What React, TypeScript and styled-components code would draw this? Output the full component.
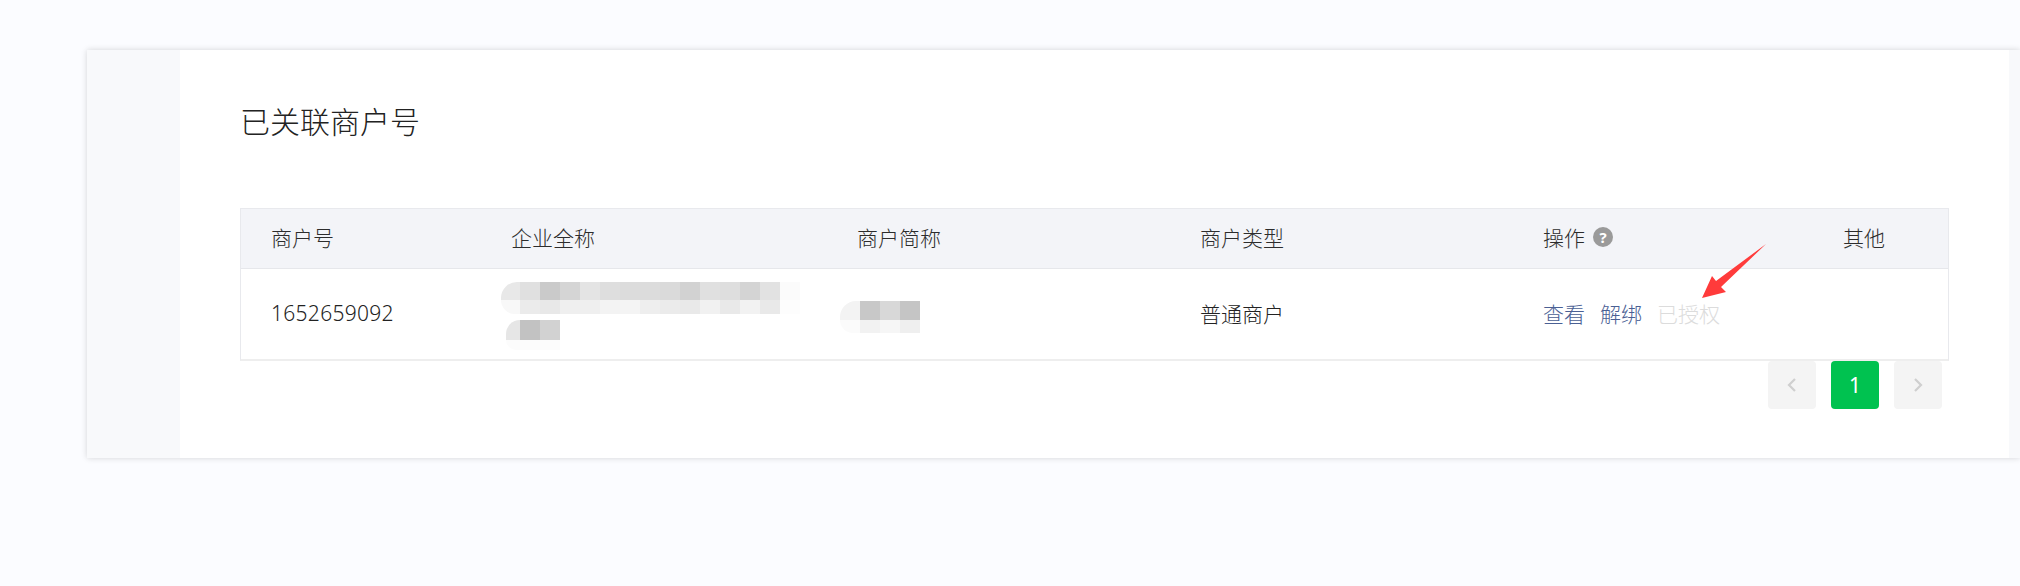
import React from 'react';
import styled, { createGlobalStyle } from 'styled-components';

const tilesTop = ['#e0e0e0', '#cacaca', '#d5d5d5', '#e4e4e4', '#dedede', '#dcdcdc', '#dcdcdc', '#dadada', '#d2d2d2', '#e0e0e0', '#dedede', '#d4d4d4', '#e2e2e2', '#fbfbfb'];
const tilesBottom = ['#ebebeb', '#e8e8e8', '#efefef', '#efefef', '#f3f3f3', '#f4f4f4', '#eeeeee', '#ebebeb', '#e9e9e9', '#f1f1f1', '#e9e9e9', '#f2f2f2', '#e9e9e9', '#fdfdfd'];

function App() {
  return (
    <>
      <GlobalStyle />
      <Page>
        <Card>
          <Side />
          <Main>
            <Title>已关联商户号</Title>
            <Table>
              <HeadRow>
                <FirstCell>商户号</FirstCell>
                <Cell>企业全称</Cell>
                <Cell>商户简称</Cell>
                <Cell>商户类型</Cell>
                <Cell>
                  操作
                  <HelpIcon>?</HelpIcon>
                </Cell>
                <Cell>其他</Cell>
              </HeadRow>
              <BodyRow>
                <FirstCell>
                  <MerchantNo>1652659092</MerchantNo>
                </FirstCell>
                <MosaicCell $pad={5}>
                  <Mosaic $offset={-10}>
                    <MosaicRow $height={18}>
                      <MosaicCap $top $color="#e8e8e8" $width={19} />
                      {tilesTop.map((color, i) => (
                        <Tile key={i} $color={color} />
                      ))}
                    </MosaicRow>
                    <MosaicRow $height={14}>
                      <MosaicCap $color="#f8f8f8" $width={19} />
                      {tilesBottom.map((color, i) => (
                        <Tile key={i} $color={color} />
                      ))}
                    </MosaicRow>
                  </Mosaic>
                  <Mosaic $offset={-5} $gap={6}>
                    <MosaicRow $height={20}>
                      <MosaicCap $top $color="#e6e6e6" $width={14} />
                      <Tile $color="#c2c2c2" />
                      <Tile $color="#d2d2d2" />
                    </MosaicRow>
                    <MosaicRow $height={10}>
                      <MosaicCap $color="#fcfcfc" $width={14} />
                      <Tile $color="#fcfcfc" />
                      <Tile $color="#fcfcfc" />
                    </MosaicRow>
                  </Mosaic>
                </MosaicCell>
                <MosaicCell $pad={7}>
                  <Mosaic $offset={-17}>
                    <MosaicRow $height={19}>
                      <MosaicCap $top $color="#f3f3f3" $width={20} />
                      <Tile $color="#c8c8c8" />
                      <Tile $color="#d8d8d8" />
                      <Tile $color="#c5c5c5" />
                    </MosaicRow>
                    <MosaicRow $height={13}>
                      <MosaicCap $color="#fbfbfb" $width={20} />
                      <Tile $color="#f2f2f2" />
                      <Tile $color="#f6f6f6" />
                      <Tile $color="#efefef" />
                    </MosaicRow>
                  </Mosaic>
                </MosaicCell>
                <Cell>普通商户</Cell>
                <ActionCell>
                  <ActionLink>查看</ActionLink>
                  <ActionLink>解绑</ActionLink>
                  <ActionLink $disabled>已授权</ActionLink>
                  <Arrow viewBox="0 0 64 54" aria-hidden="true">
                    <polygon points="0,54 10,32 14,37 64,0 19,43 24,48" fill="#ff3b3b" />
                  </Arrow>
                </ActionCell>
                <Cell />
              </BodyRow>
            </Table>
            <Pagination>
              <PageButton aria-label="上一页">
                <svg width="12" height="16" viewBox="0 0 12 16">
                  <polyline points="9,2 3,8 9,14" fill="none" stroke="#cfcfcf" strokeWidth="2.200" />
                </svg>
              </PageButton>
              <PageButton $active>1</PageButton>
              <PageButton aria-label="下一页">
                <svg width="12" height="16" viewBox="0 0 12 16">
                  <polyline points="3,2 9,8 3,14" fill="none" stroke="#cfcfcf" strokeWidth="2.200" />
                </svg>
              </PageButton>
            </Pagination>
          </Main>
          <RightStrip />
        </Card>
      </Page>
    </>
  );
}

const GlobalStyle = createGlobalStyle`
  html, body {
    margin: 0;
    padding: 0;
    background: #fbfcff;
  }
  body {
    font-family: "Noto Sans", "Noto Sans CJK SC", sans-serif;
  }
`;

const Page = styled.div`
  width: 2020px;
  height: 586px;
  overflow: hidden;
  padding: 50px 0 0 87px;
  box-sizing: border-box;
`;

const Card = styled.div`
  display: flex;
  width: 1933px;
  height: 408px;
  box-shadow: 0 0 6px rgba(0, 0, 0, 0.16);
`;

const Side = styled.div`
  width: 93px;
  flex-shrink: 0;
  background: #f8f9fb;
`;

const RightStrip = styled.div`
  width: 11px;
  flex-shrink: 0;
  background: #f8f9fb;
`;

const Main = styled.div`
  width: 1829px;
  flex-shrink: 0;
  background: #fff;
  padding: 0 60px;
  box-sizing: border-box;
`;

const Title = styled.h2`
  margin: 0;
  height: 158px;
  padding-top: 50px;
  box-sizing: border-box;
  font-size: 30px;
  line-height: 44px;
  font-weight: 300;
  color: #222222;
`;

const Table = styled.div`
  width: 1709px;
  border: 1px solid #e8e9ed;
  border-bottom: 2px solid #eeeeee;
  box-sizing: border-box;
`;

const columns = '270px 346px 343px 343px 300px 1fr';

const HeadRow = styled.div`
  display: grid;
  grid-template-columns: ${columns};
  height: 60px;
  padding-bottom: 3px;
  align-items: center;
  background: #f3f4f8;
  border-bottom: 1px solid #e6e7eb;
  box-sizing: border-box;
  font-size: 21px;
  font-weight: 300;
  color: #2c2c2c;
`;

const BodyRow = styled.div`
  display: grid;
  grid-template-columns: ${columns};
  height: 90px;
  padding-bottom: 2px;
  box-sizing: border-box;
  align-items: center;
  font-size: 21px;
  font-weight: 300;
  color: #222222;
`;

const Cell = styled.div`
  display: flex;
  align-items: center;
  white-space: nowrap;
`;

const FirstCell = styled(Cell)`
  padding-left: 30px;
`;

const MerchantNo = styled.span`
  font-size: 21px;
  letter-spacing: 0.3px;
`;

const HelpIcon = styled.span`
  display: inline-flex;
  align-items: center;
  justify-content: center;
  width: 20px;
  height: 20px;
  margin-left: 8px;
  border-radius: 50%;
  background: #9a9a9a;
  color: #fff;
  font-size: 15px;
  font-weight: 700;
  line-height: 1;
`;

const MosaicCell = styled.div<{ $pad: number }>`
  display: flex;
  flex-direction: column;
  padding-top: ${(p) => p.$pad}px;
`;

const Mosaic = styled.div<{ $offset: number; $gap?: number }>`
  display: flex;
  flex-direction: column;
  margin-left: ${(p) => p.$offset}px;
  margin-top: ${(p) => p.$gap ?? 0}px;
`;

const MosaicRow = styled.div<{ $height: number }>`
  display: flex;
  height: ${(p) => p.$height}px;
`;

const MosaicCap = styled.div<{ $top?: boolean; $color: string; $width: number }>`
  width: ${(p) => p.$width}px;
  background: ${(p) => p.$color};
  border-radius: ${(p) => (p.$top ? '16px 0 0 0' : '0 0 0 16px')};
`;

const Tile = styled.div<{ $color: string }>`
  width: 20px;
  background: ${(p) => p.$color};
`;

const ActionCell = styled(Cell)`
  position: relative;
  gap: 15px;
`;

const ActionLink = styled.a<{ $disabled?: boolean }>`
  color: ${(p) => (p.$disabled ? '#dcdcdc' : '#4a6094')};
`;

const Arrow = styled.svg`
  position: absolute;
  left: 159px;
  top: -54px;
  width: 64px;
  height: 54px;
`;

const Pagination = styled.div`
  display: flex;
  justify-content: flex-end;
  gap: 15px;
  width: 1702px;
`;

const PageButton = styled.div<{ $active?: boolean }>`
  display: flex;
  align-items: center;
  justify-content: center;
  width: 48px;
  height: 48px;
  border-radius: 4px;
  background: ${(p) => (p.$active ? '#00c250' : '#f4f4f4')};
  color: #fff;
  font-size: 21px;
`;

export default App;
